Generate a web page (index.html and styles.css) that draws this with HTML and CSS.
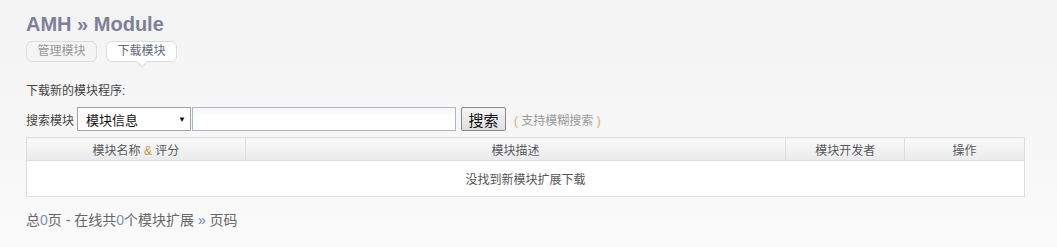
FILE: index.html
```html
<!DOCTYPE html>
<html lang="zh-CN">
<head>
    <meta charset="UTF-8">
    <meta name="viewport" content="width=device-width, initial-scale=1.0">
    <title>AMH » Module</title>
    <link rel="stylesheet" href="styles.css">
</head>
<body>
    <div class="main">
        <h2 class="title">AMH » Module</h2>
        <div class="tabs">
            <a class="tab">管理模块</a>
            <a class="tab active">下载模块</a>
        </div>

        <p class="intro">下载新的模块程序:</p>

        <div class="search">
            <span class="label">搜索模块</span>
            <div class="select">
                <span>模块信息</span>
                <span class="arrow">▼</span>
            </div>
            <input type="text" class="keyword">
            <button class="btn">搜索</button>
            <span class="hint"><i>(</i> 支持模糊搜索 <i>)</i></span>
        </div>

        <table class="list">
            <tr>
                <th class="c1">模块名称 <b>&amp;</b> 评分</th>
                <th class="c2">模块描述</th>
                <th class="c3">模块开发者</th>
                <th class="c4">操作</th>
            </tr>
            <tr>
                <td colspan="4">没找到新模块扩展下载</td>
            </tr>
        </table>

        <div class="pages">总<span class="num">0</span>页 - 在线共<span class="num">0</span>个模块扩展 <span class="raquo">»</span> 页码</div>
    </div>
</body>
</html>
```

FILE: styles.css
```css
* {
    font-family: 'Liberation Sans', 'Noto Sans CJK SC', sans-serif;
    box-sizing: border-box;
}

body {
    margin: 0;
    background: linear-gradient(180deg, #f3f3f3, #fafafa);
    height: 247px;
    color: #333;
    font-size: 12px;
}

.main {
    padding: 11px 0 0 26px;
    width: 1025px;
}

.title {
    margin: 0;
    font-size: 20px;
    line-height: 26px;
    color: #7d8198;
    font-weight: bold;
}

.tabs {
    display: flex;
    gap: 9px;
    margin-top: 4px;
}

.tab {
    position: relative;
    display: block;
    width: 71px;
    height: 21px;
    line-height: 19px;
    text-align: center;
    border: 1px solid #dcdcdc;
    border-radius: 6px;
    color: #999;
    font-size: 12px;
}

.tab.active {
    background: #fff;
    color: #5e6b7e;
}

.tab.active::after {
    content: "";
    position: absolute;
    left: 31px;
    bottom: -5px;
    width: 7px;
    height: 7px;
    background: #fff;
    border-right: 1px solid #dcdcdc;
    border-bottom: 1px solid #dcdcdc;
    transform: rotate(45deg);
}

.intro {
    margin: 21px 0 0;
    line-height: 16px;
    color: #444;
}

.search {
    display: flex;
    align-items: center;
    margin-top: 8px;
    height: 24px;
}

.label {
    color: #444;
    margin-right: 3px;
}

.select {
    display: flex;
    justify-content: space-between;
    align-items: center;
    width: 114px;
    height: 24px;
    padding: 0 4px 0 8px;
    border: 1px solid #a5a5a5;
    background: #fff;
    color: #111;
    font-size: 13px;
}

.arrow {
    font-size: 8px;
}

.keyword {
    width: 264px;
    height: 24px;
    margin-left: 1px;
    border: 1px solid #a9b5cf;
    background: linear-gradient(180deg, #f6f6f6, #fff 40%);
}

.btn {
    margin-left: 5px;
    width: 45px;
    height: 24px;
    padding: 0;
    border: 1px solid #8a8a8a;
    border-radius: 2px;
    background: linear-gradient(180deg, #f5f5f5, #dedede);
    font-size: 15px;
    color: #111;
}

.hint {
    margin-left: 8px;
    color: #999;
}

.hint i {
    font-style: normal;
    color: #e2a56a;
}

.list {
    width: 999px;
    margin-top: 6px;
    border-collapse: collapse;
    border: 1px solid #dcdfde;
    background: #fff;
}

.list th {
    height: 23px;
    padding: 0;
    font-weight: normal;
    color: #555;
    font-size: 12px;
    background: linear-gradient(180deg, #fafafa, #e9eaeb);
    border: 1px solid #dcdfde;
    text-shadow: 0 1px 0 #fff;
}

.list th b {
    font-weight: normal;
    color: #c98a3c;
}

.c1 { width: 219px; }
.c2 { width: 541px; }
.c3 { width: 119px; }
.c4 { width: 120px; }

.list td {
    height: 36px;
    padding: 0;
    text-align: center;
    color: #555;
}

.pages {
    margin-top: 12px;
    font-size: 14px;
    color: #666;
}

.num {
    color: #7a8fb5;
}

.raquo {
    color: #5a7fc0;
}
```
